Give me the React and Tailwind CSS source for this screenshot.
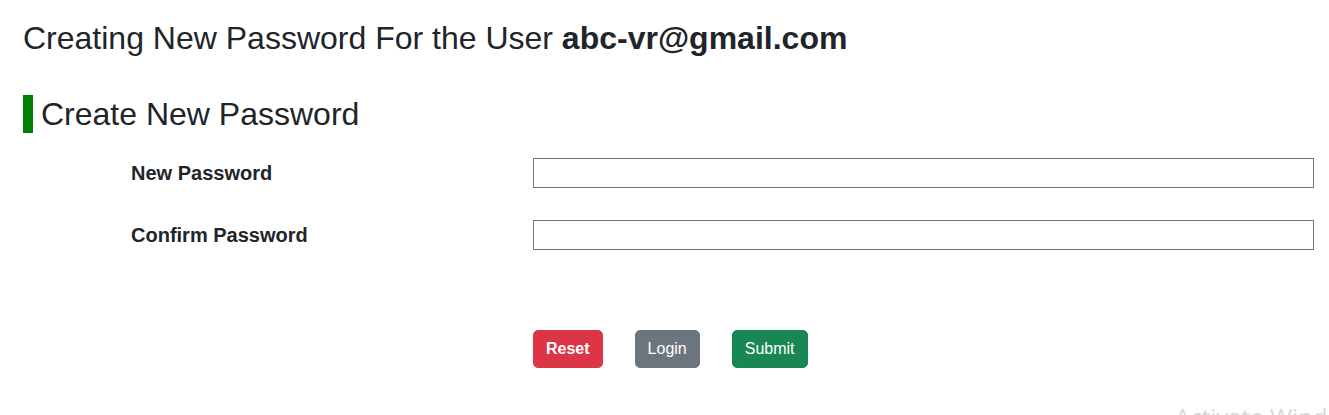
export default function App() {
  return (
    <div
      className="relative min-h-[415px] bg-white text-[#212529] overflow-hidden"
      style={{ fontFamily: '"Liberation Sans", Arial, sans-serif' }}
    >
      <div className="pl-[23px] pt-[19px]">
        <h1 className="text-[32px] leading-[1.2] font-normal">
          Creating New Password For the User <span className="font-bold">abc-vr@gmail.com</span>
        </h1>
        <h2 className="mt-[38px] text-[32px] leading-[38px] font-normal border-l-[10px] border-[#008000] pl-[8px]">
          Create New Password
        </h2>
      </div>

      <div className="mt-[25px] grid grid-cols-[402px_781px] gap-y-[32px] pl-[131px]">
        <label className="flex items-center h-[30px] text-[20px] font-bold">New Password</label>
        <input type="password" className="h-[30px] border border-[#767676] bg-white outline-none" />
        <label className="flex items-center h-[30px] text-[20px] font-bold">Confirm Password</label>
        <input type="password" className="h-[30px] border border-[#767676] bg-white outline-none" />
      </div>

      <div className="mt-[80px] flex gap-[32px] pl-[533px]">
        <button className="h-[38px] px-[12px] border border-[#dc3545] bg-[#dc3545] text-white text-[16px] leading-[24px] font-bold rounded-[5px]">
          Reset
        </button>
        <button className="h-[38px] px-[12px] border border-[#6c757d] bg-[#6c757d] text-white text-[16px] leading-[24px] rounded-[5px]">
          Login
        </button>
        <button className="h-[38px] px-[12px] border border-[#198754] bg-[#198754] text-white text-[16px] leading-[24px] rounded-[5px]">
          Submit
        </button>
      </div>

      <div
        className="absolute left-[1175px] top-[402px] text-[24px] leading-[30px] text-[#d8d8d8] whitespace-nowrap"
        style={{ fontFamily: '"Open Sans", "Noto Sans", sans-serif' }}
      >
        Activate Windows
      </div>
    </div>
  );
}
